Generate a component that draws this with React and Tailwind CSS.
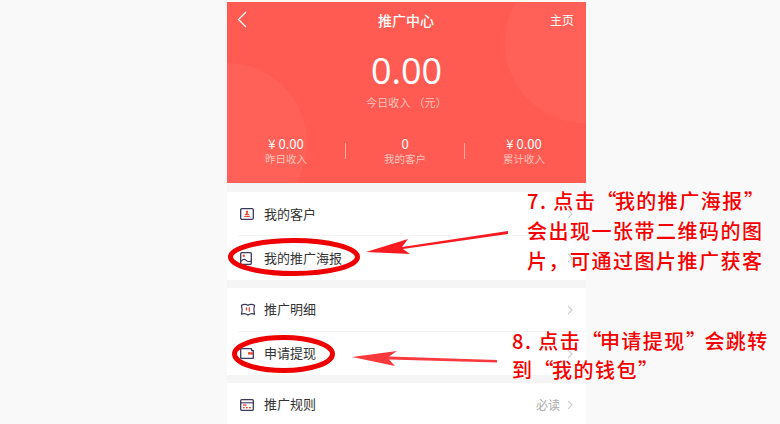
const cjk = { fontFamily: '"Noto Sans CJK SC", "Noto Sans", sans-serif' };

function Chevron() {
  return (
    <svg width="6" height="10" viewBox="0 0 6 10" fill="none" stroke="#cccccc" strokeWidth="1.1">
      <path d="M1 .8l4 4.200-4 4.200" />
    </svg>
  );
}

function IconCustomer() {
  return (
    <svg width="14" height="12" viewBox="0 0 14 12" fill="none">
      <rect x=".7" y=".7" width="12.600" height="10.600" rx="1.200" stroke="#3a3a5a" strokeWidth="1.300" />
      <path d="M7 2.600a1.100 1.100 0 0 1 .8 1.900v1.100l1.500.8v.8H4.700v-.8l1.500-.8V4.500a1.100 1.100 0 0 1 .8-1.900z" fill="#ef4a36" />
      <rect x="4.200" y="8" width="5.600" height="1" fill="#ef4a36" />
    </svg>
  );
}
function IconPoster() {
  return (
    <svg width="12" height="13" viewBox="0 0 12 13" fill="none">
      <rect x=".7" y=".7" width="10.600" height="11.600" rx="1" stroke="#3a3a5a" strokeWidth="1.300" />
      <circle cx="3.800" cy="3.800" r="1.200" fill="#ef4a36" />
      <path d="M1 9.400c2-2.500 3.800-2.500 5.200-1s3 1.400 4.800.5" stroke="#3a3a5a" strokeWidth="1.100" />
    </svg>
  );
}
function IconDetail() {
  return (
    <svg width="16" height="13" viewBox="0 0 17 14" fill="none">
      <path d="M1.500 2.500C4 1 6 1 8.500 2.500 11 1 13 1 15.500 2.500L14.800 7l.7 5C13 11 11 11 8.500 13 6 11 4 11 1.500 12l.7-5z" stroke="#3a3a5a" strokeWidth="1.300" strokeLinejoin="round" />
      <path d="M6.800 4.500v3.500M10 4.500v5" stroke="#ef4a36" strokeWidth="1.400" />
    </svg>
  );
}
function IconWallet() {
  return (
    <svg width="14" height="11" viewBox="0 0 14 11" fill="none">
      <path d="M2 .7h9.500v1.800h1.800v7.800H.7V2A1.300 1.300 0 0 1 2 .7z" stroke="#3a3a5a" strokeWidth="1.300" strokeLinejoin="round" />
      <rect x="8" y="4.200" width="5" height="2.400" fill="#ef4a36" />
    </svg>
  );
}
function IconRule() {
  return (
    <svg width="14" height="12" viewBox="0 0 14 12" fill="none">
      <rect x=".7" y=".7" width="12.600" height="10.600" rx="1" stroke="#3a3a5a" strokeWidth="1.300" />
      <path d="M1 3.800h12" stroke="#3a3a5a" strokeWidth="1.100" />
      <rect x="3" y="5.400" width="3.500" height="1.400" fill="#ef4a36" />
      <rect x="3" y="8" width="1.800" height="1.300" fill="#ef4a36" />
      <rect x="6" y="8" width="1.800" height="1.300" fill="#ef4a36" />
      <rect x="9" y="8" width="1.800" height="1.300" fill="#ef4a36" />
    </svg>
  );
}

function Row({ icon, label, right, divider, short, lift }) {
  return (
    <div className={`pl-[11px] ${short ? "h-[43px]" : "h-[44px]"}`}>
      <div className={`h-full flex items-center pr-[13px] ${divider ? "border-b border-[#f4f4f4]" : ""}`}>
        <div className="w-[26px] flex items-center pl-[2px] shrink-0">{icon}</div>
        <span className={`flex-1 text-[13px] text-[#333333] ${lift ? "mb-[2px]" : ""}`}>{label}</span>
        <span className="flex items-center gap-[7px]">
          {right && <span className="text-[12px] text-[#aaaaaa]">{right}</span>}
          <Chevron />
        </span>
      </div>
    </div>
  );
}

function Stat({ value, label }) {
  return (
    <div className="flex-1 flex flex-col items-center">
      <span className="text-[13px] leading-[15px] text-white">{value}</span>
      <span className="text-[10.5px] leading-[15px] text-[#ffc4bd]">{label}</span>
    </div>
  );
}

function Quote({ children }) {
  return <span className="tracking-[-1.500px]">{children}</span>;
}

export default function App() {
  return (
    <div className="relative w-[780px] h-[424px] overflow-hidden bg-[#f9f9f9] pt-[2px]" style={cjk}>
      <div className="w-[359px] ml-[227px] bg-[#f5f5f5]">
        <div className="relative h-[181px] bg-[#ff5b52] overflow-hidden text-white">
          <div className="absolute left-[-80px] top-[61px] w-[160px] h-[160px] rounded-full bg-[#ff6158]" />
          <div className="absolute left-[278px] top-[-39px] w-[160px] h-[160px] rounded-full bg-[#ff6158]" />
          <div className="relative h-full flex flex-col">
            <div className="h-[36px] flex items-center justify-between pl-[10px] pr-[12px]">
              <svg width="11" height="17" viewBox="0 0 11 17" fill="none" stroke="#ffffff" strokeWidth="1.200" className="mb-[1px]">
                <path d="M9 1L1.500 8.500 9 16" />
              </svg>
              <span className="text-[14px] ml-[14px] font-medium">推广中心</span>
              <span className="text-[12px]">主页</span>
            </div>
            <div className="flex flex-col items-center mt-[10px]">
              <span className="text-[36px] leading-[46px]" style={{ fontFamily: '"Open Sans", sans-serif' }}>0.00</span>
              <span className="text-[11px] leading-[16px] text-[#ffc4bd] tracking-[0.200px]">今日收入 （元）</span>
            </div>
            <div className="flex items-center mt-[26px] pr-[3px]">
              <Stat value="¥ 0.00" label="昨日收入" />
              <div className="w-px h-[16px] bg-[#ffa59f]" />
              <Stat value="0" label="我的客户" />
              <div className="w-px h-[16px] bg-[#ffa59f]" />
              <Stat value="¥ 0.00" label="累计收入" />
            </div>
          </div>
        </div>
        <div className="mt-[9px] bg-white">
          <Row icon={<IconCustomer />} label="我的客户" divider />
          <Row icon={<IconPoster />} label="我的推广海报" />
        </div>
        <div className="mt-[8px] bg-white">
          <Row icon={<IconDetail />} label="推广明细" divider lift />
          <Row icon={<IconWallet />} label="申请提现" short lift />
        </div>
        <div className="mt-[8px] bg-white">
          <Row icon={<IconRule />} label="推广规则" right="必读" lift />
        </div>
      </div>

      <svg className="absolute left-0 top-0 pointer-events-none" width="780" height="424" fill="none">
        <ellipse cx="294" cy="257" rx="63.500" ry="16.500" stroke="#ee0000" strokeWidth="5" />
        <ellipse cx="283.500" cy="354" rx="49" ry="16.500" stroke="#ee0000" strokeWidth="5" />
        <path d="M366 252L408 239L402 247L508 231L508 234L403 249L410 254Z" fill="#f81c22" />
        <path d="M352 357L397 351L389 356.500L497 360L497 362.500L389 359.500L395 366Z" fill="#f83a3e" />
      </svg>

      <div className="absolute left-[527px] top-[186px] text-[20px] leading-[30px] tracking-[1.500px] font-medium text-[#f50000] whitespace-pre">
        <div>7. 点击<Quote>“</Quote>我的推广海报<Quote>”</Quote></div>
        <div>会出现一张带二维码的图</div>
        <div>片，可通过图片推广获客</div>
      </div>
      <div className="absolute left-[512px] top-[326px] text-[20px] leading-[29px] tracking-[1.500px] font-medium text-[#f50000] whitespace-pre">
        <div>8. 点击<Quote>“</Quote>申请提现<Quote>”</Quote>会跳转</div>
        <div>到<Quote>“</Quote>我的钱包<Quote>”</Quote></div>
      </div>
    </div>
  );
}
